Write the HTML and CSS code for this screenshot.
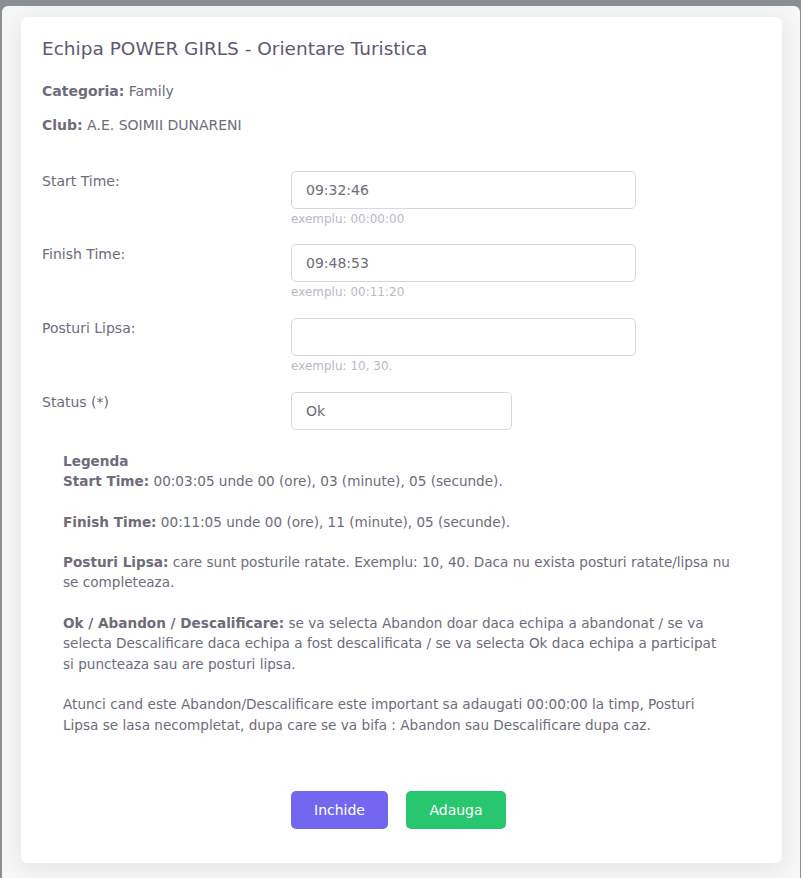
FILE: index.html
```html
<!DOCTYPE html>
<html lang="ro">
<head>
<meta charset="utf-8">
<title>Echipa POWER GIRLS</title>
<link rel="stylesheet" href="styles.css">
</head>
<body>
<div class="backdrop">
  <div class="panel">
    <div class="card">
      <h4 class="title">Echipa POWER GIRLS - Orientare Turistica</h4>
      <p class="info"><strong>Categoria:</strong> Family</p>
      <p class="info"><strong>Club:</strong> A.E. SOIMII DUNARENI</p>

      <form class="form">
        <div class="row">
          <label class="label">Start Time:</label>
          <div class="control">
            <input class="field" type="text" value="09:32:46">
            <small class="help">exemplu: 00:00:00</small>
          </div>
        </div>
        <div class="row">
          <label class="label">Finish Time:</label>
          <div class="control">
            <input class="field" type="text" value="09:48:53">
            <small class="help">exemplu: 00:11:20</small>
          </div>
        </div>
        <div class="row">
          <label class="label">Posturi Lipsa:</label>
          <div class="control">
            <input class="field" type="text" value="">
            <small class="help">exemplu: 10, 30.</small>
          </div>
        </div>
        <div class="row row-last">
          <label class="label">Status (*)</label>
          <div class="control">
            <select class="field field-select">
              <option>Ok</option>
            </select>
          </div>
        </div>

        <div class="legend">
          <p class="legend-head">Legenda</p>
          <p><strong>Start Time:</strong> 00:03:05 unde 00 (ore), 03 (minute), 05 (secunde).</p>
          <p><strong>Finish Time:</strong> 00:11:05 unde 00 (ore), 11 (minute), 05 (secunde).</p>
          <p><strong>Posturi Lipsa:</strong> care sunt posturile ratate. Exemplu: 10, 40. Daca nu exista posturi ratate/lipsa nu<br>se completeaza.</p>
          <p><strong>Ok / Abandon / Descalificare:</strong> se va selecta Abandon doar daca echipa a abandonat / se va<br>selecta Descalificare daca echipa a fost descalificata / se va selecta Ok daca echipa a participat<br>si puncteaza sau are posturi lipsa.</p>
          <p>Atunci cand este Abandon/Descalificare este important sa adaugati 00:00:00 la timp, Posturi<br>Lipsa se lasa necompletat, dupa care se va bifa : Abandon sau Descalificare dupa caz.</p>
        </div>

        <div class="actions">
          <button type="button" class="btn btn-primary">Inchide</button>
          <button type="button" class="btn btn-success">Adauga</button>
        </div>
      </form>
    </div>
  </div>
</div>
</body>
</html>
```

FILE: styles.css
```css
* {
  box-sizing: border-box;
}

html, body {
  margin: 0;
  padding: 0;
}

body {
  background: #8b8e92;
  font-family: "DejaVu Sans", "Open Sans", sans-serif;
  font-size: 14px;
  line-height: 20.3px;
  color: #6e6b7b;
  height: 878px;
  overflow: hidden;
}

.backdrop {
  padding: 6px 1px 0 2px;
}

.panel {
  background: #f7f7f7;
  border-radius: 6px 6px 0 0;
  height: 872px;
  padding: 11px 18px 0 19px;
}

.card {
  background: #fff;
  border-radius: 6px;
  box-shadow: 0 4px 24px rgba(34, 41, 47, 0.1);
  height: 846px;
  padding: 21px;
}

.title {
  margin: 0 0 21px;
  font-size: 18.5px;
  line-height: 22px;
  font-weight: 500;
  color: #5e5873;
}

.info {
  margin: 0 0 14px;
}

.info strong,
.legend strong {
  font-weight: 700;
  color: #6e6b7b;
}

.form {
  margin-top: 35px;
}

.row {
  display: grid;
  grid-template-columns: 221px 345px;
  column-gap: 28px;
  align-items: start;
  margin-bottom: 16.3px;
}

.row-last {
  margin-bottom: 0;
  grid-template-columns: 221px 221px;
}

.label {
  display: block;
  line-height: 20.3px;
}

.control {
  display: flex;
  flex-direction: column;
}

.field {
  display: block;
  width: 100%;
  height: 38px;
  padding: 0 14px;
  border: 1px solid #d8d6de;
  border-radius: 5px;
  background: #fff;
  font-family: inherit;
  font-size: 14px;
  color: #6e6b7b;
  outline: none;
}

.field-select {
  appearance: none;
  -webkit-appearance: none;
}

.help {
  display: block;
  margin-top: 2px;
  font-size: 12px;
  line-height: 17.4px;
  color: #b9b9c3;
}

.legend {
  margin-top: 21px;
  padding: 0 21px;
  font-size: 13.6px;
}

.legend p {
  margin: 0 0 20.3px;
}

.legend .legend-head {
  margin: 0;
  font-weight: 700;
}

.legend p:last-child {
  margin-bottom: 0;
}

.actions {
  display: flex;
  justify-content: center;
  gap: 18px;
  margin-top: 56.5px;
  padding-right: 6px;
}

.btn {
  height: 38px;
  border: 0;
  border-radius: 5px;
  font-family: inherit;
  font-size: 14px;
  font-weight: 500;
  line-height: 1;
  color: #fff;
  padding: 0;
  cursor: pointer;
}

.btn-primary {
  width: 97px;
  background: #7367f0;
}

.btn-success {
  width: 100px;
  background: #28c76f;
}
```
